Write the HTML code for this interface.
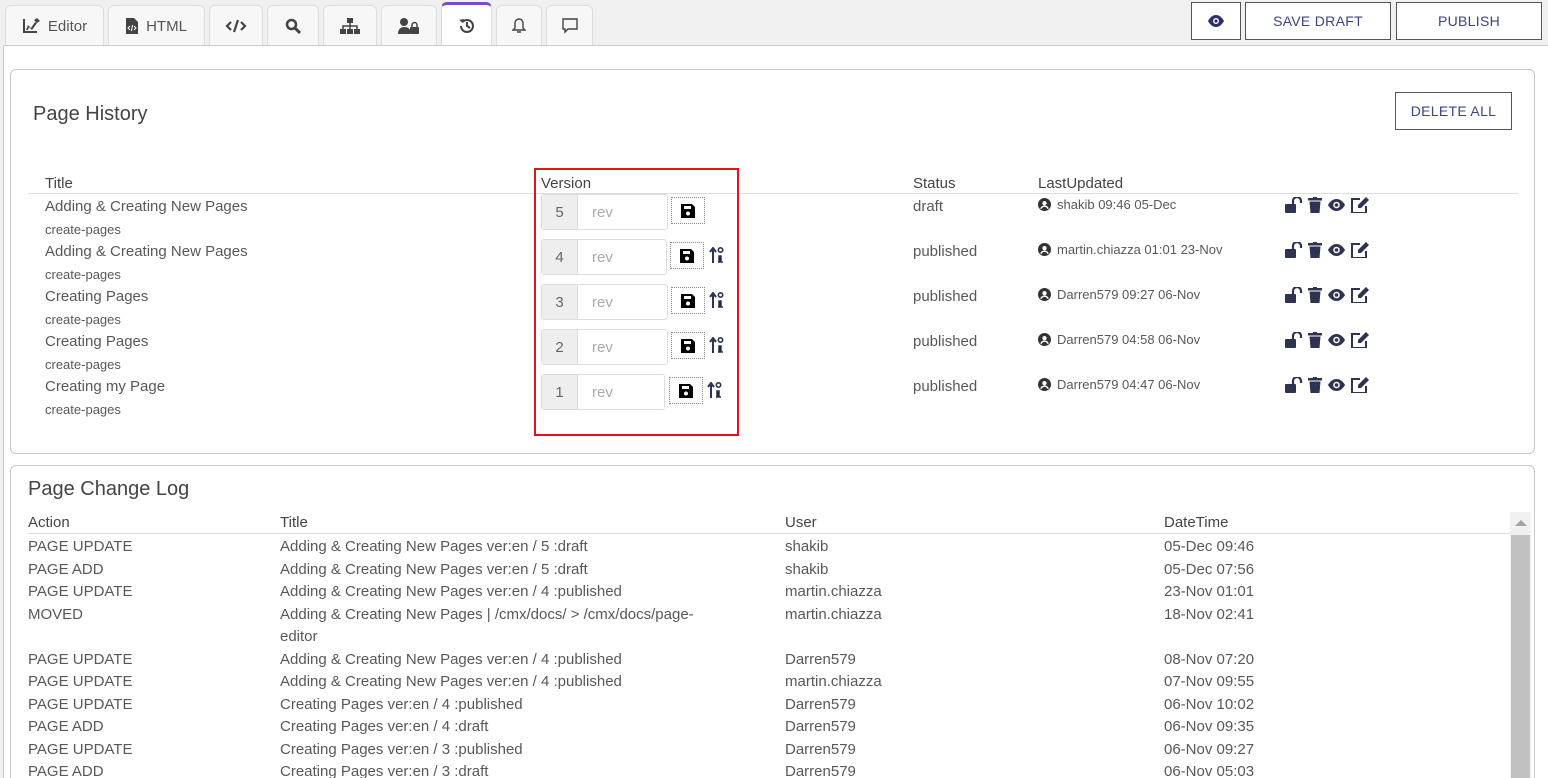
<!DOCTYPE html>
<html><head><meta charset="utf-8"><style>
*{box-sizing:border-box;margin:0;padding:0}
html{width:1548px;height:778px;overflow:hidden}
body{width:1548px;height:778px;overflow:hidden;background:#f0f0f0;font-family:"Liberation Sans",sans-serif;color:#585858;position:relative;font-size:15px}
.a{position:absolute;white-space:nowrap}
.tab{position:absolute;top:5px;height:41px;background:#f7f7f7;border:1px solid #ddd;border-bottom:none;border-radius:6px 6px 0 0;display:flex;align-items:center;justify-content:center;color:#555;font-size:15px;gap:8px}
.tab svg{fill:#444}
.main{position:absolute;left:3px;top:45px;width:1545px;height:733px;background:#fff;border-left:1px solid #ccc;border-top:1px solid #ccc}
.panel{position:absolute;border:1px solid #c8c8c8;border-radius:6px;background:#fff}
.btn{position:absolute;border:1px solid #555;background:#fff;color:#3b4480;font-size:14px;display:flex;align-items:center;justify-content:center;letter-spacing:.3px}
.small{font-size:13px;color:#585858}
.ver{position:absolute;left:541px;width:127px;height:36px;border:1px solid #ddd;border-radius:3px;background:#fff}
.ver .n{position:absolute;left:0;top:0;width:36px;height:34px;background:#eee;border-right:1px solid #ddd;display:flex;align-items:center;justify-content:center;color:#666}
.ver .r{position:absolute;left:50px;top:9px;color:#aaa}
.sv{position:absolute;width:34px;height:27px;border:1px dotted #888;display:flex;align-items:center;justify-content:center}
.icons{position:absolute;left:1285px;display:flex;gap:5px}
.icons svg{fill:#2d3350}
.u{display:inline-block;width:13px;height:13px;vertical-align:-2px;margin-right:6px}
</style></head><body>

<div class="tab" style="left:5px;width:99px"><svg width="18" height="16" viewBox="0 0 18 16"><path d="M1 1h2v12h12v2H1z M4 12l2-5 3 3 4-6 2 1-5 7-3-3-1 3z M12 2l3-2 3 3-3 2z"/></svg>Editor</div>
<div class="tab" style="left:108px;width:97px"><svg width="12" height="16" viewBox="0 0 12 16"><path d="M0 0h8l4 4v12H0z" /><path d="M4 8l-2 2 2 2M8 8l2 2-2 2M6.5 7l-1 6" stroke="#fff" fill="none"/></svg>HTML</div>
<div class="tab" style="left:209px;width:54px"><svg width="22" height="14" viewBox="0 0 22 14"><path d="M6 3L2 7l4 4M16 3l4 4-4 4M13 1L9 13" stroke="#444" stroke-width="2.2" fill="none"/></svg></div>
<div class="tab" style="left:267px;width:52px"><svg width="16" height="16" viewBox="0 0 16 16"><circle cx="6.5" cy="6.5" r="4.5" stroke="#444" stroke-width="2.5" fill="none"/><path d="M10 10l5 5" stroke="#444" stroke-width="3"/></svg></div>
<div class="tab" style="left:323px;width:54px"><svg width="20" height="16" viewBox="0 0 20 16"><rect x="7" y="0" width="6" height="5"/><rect x="0" y="11" width="6" height="5"/><rect x="7" y="11" width="6" height="5"/><rect x="14" y="11" width="6" height="5"/><path d="M10 5v6M3 11V8h14v3" stroke="#444" stroke-width="1.5" fill="none"/></svg></div>
<div class="tab" style="left:381px;width:56px"><svg width="22" height="16" viewBox="0 0 22 16"><circle cx="6" cy="4" r="4"/><path d="M0 16c0-5 3-7 6-7s5 1 6 3v4z"/><rect x="12" y="9" width="9" height="7" rx="1"/><path d="M14 9V7a2.5 2.5 0 015 0v2" stroke="#444" stroke-width="1.5" fill="none"/></svg></div>
<div class="tab" style="left:441px;width:51px;top:2px;height:44px;background:#fff;border-top:3px solid #7b4bc4"><svg width="18" height="16" viewBox="0 0 18 16"><path d="M3 8a6 6 0 106-6 6 6 0 00-4.5 2" stroke="#444" stroke-width="2" fill="none"/><path d="M1 2l4 3 1-4z"/><path d="M9 4v4l3 2" stroke="#444" stroke-width="2" fill="none"/></svg></div>
<div class="tab" style="left:496px;width:46px"><svg width="14" height="16" viewBox="0 0 14 16"><path d="M7 1a4 4 0 014 4v5l2 2H1l2-2V5a4 4 0 014-4z M5 14h4" stroke="#444" stroke-width="1.4" fill="none"/></svg></div>
<div class="tab" style="left:546px;width:47px"><svg width="16" height="16" viewBox="0 0 16 16"><path d="M1 1h14v10H6l-3 3v-3H1z" stroke="#444" stroke-width="1.4" fill="none"/></svg></div>

<div class="btn" style="left:1191px;top:2px;width:50px;height:38px"><svg width="18" height="12" viewBox="0 0 18 12"><path d="M9 0C4 0 1 6 1 6s3 6 8 6 8-6 8-6-3-6-8-6z" fill="#2b2f6b"/><circle cx="9" cy="6" r="3" fill="#fff"/><circle cx="9" cy="6" r="1.6" fill="#2b2f6b"/></svg></div>
<div class="btn" style="left:1245px;top:2px;width:146px;height:38px">SAVE DRAFT</div>
<div class="btn" style="left:1396px;top:2px;width:146px;height:38px">PUBLISH</div>

<div class="main"></div>

<div class="panel" style="left:10px;top:69px;width:1525px;height:385px"></div>
<div class="a" style="left:33px;top:103px;font-size:20px;color:#444">Page History</div>
<div class="btn" style="left:1395px;top:92px;width:117px;height:38px">DELETE ALL</div>

<div class="a" style="left:45px;top:175px;color:#444">Title</div>
<div class="a" style="left:541px;top:175px;color:#444">Version</div>
<div class="a" style="left:913px;top:175px;color:#444">Status</div>
<div class="a" style="left:1038px;top:175px;color:#444">LastUpdated</div>
<div class="a" style="left:28px;top:193px;width:1490px;height:1px;background:#ddd"></div>

<div class="a" style="left:45px;top:198px">Adding &amp; Creating New Pages</div><div class="a small" style="left:45px;top:222px">create-pages</div>
<div class="a" style="left:45px;top:243px">Adding &amp; Creating New Pages</div><div class="a small" style="left:45px;top:267px">create-pages</div>
<div class="a" style="left:45px;top:288px">Creating Pages</div><div class="a small" style="left:45px;top:312px">create-pages</div>
<div class="a" style="left:45px;top:333px">Creating Pages</div><div class="a small" style="left:45px;top:357px">create-pages</div>
<div class="a" style="left:45px;top:378px">Creating my Page</div><div class="a small" style="left:45px;top:402px">create-pages</div>

<div class="ver" style="top:194px"><div class="n">5</div><div class="r">rev</div></div>
<div class="ver" style="top:239px;width:126px"><div class="n">4</div><div class="r">rev</div></div>
<div class="ver" style="top:284px"><div class="n">3</div><div class="r">rev</div></div>
<div class="ver" style="top:329px"><div class="n">2</div><div class="r">rev</div></div>
<div class="ver" style="top:374px;width:124px"><div class="n">1</div><div class="r">rev</div></div>

<div class="sv" style="left:671px;top:197px"><svg width="14" height="14" viewBox="0 0 14 14"><path d="M0 0h11l3 3v11H0z"/><rect x="3" y="2" width="7" height="3" fill="#fff"/><circle cx="7" cy="9.5" r="2" fill="#fff"/></svg></div>
<div class="sv" style="left:670px;top:242px"><svg width="14" height="14" viewBox="0 0 14 14"><path d="M0 0h11l3 3v11H0z"/><rect x="3" y="2" width="7" height="3" fill="#fff"/><circle cx="7" cy="9.5" r="2" fill="#fff"/></svg></div>
<div class="sv" style="left:671px;top:287px"><svg width="14" height="14" viewBox="0 0 14 14"><path d="M0 0h11l3 3v11H0z"/><rect x="3" y="2" width="7" height="3" fill="#fff"/><circle cx="7" cy="9.5" r="2" fill="#fff"/></svg></div>
<div class="sv" style="left:671px;top:332px"><svg width="14" height="14" viewBox="0 0 14 14"><path d="M0 0h11l3 3v11H0z"/><rect x="3" y="2" width="7" height="3" fill="#fff"/><circle cx="7" cy="9.5" r="2" fill="#fff"/></svg></div>
<div class="sv" style="left:669px;top:377px"><svg width="14" height="14" viewBox="0 0 14 14"><path d="M0 0h11l3 3v11H0z"/><rect x="3" y="2" width="7" height="3" fill="#fff"/><circle cx="7" cy="9.5" r="2" fill="#fff"/></svg></div>

<svg class="a" style="left:709px;top:247px" width="15" height="16" viewBox="0 0 15 16"><path d="M4 16V3M1 5l3-4 3 4" stroke="#2d3350" stroke-width="2" fill="none"/><circle cx="11.5" cy="3" r="2.2" stroke="#2d3350" stroke-width="1.6" fill="none"/><path d="M10 9h2v6h-2zM9 15h5" stroke="#2d3350" stroke-width="1.5"/></svg>
<svg class="a" style="left:709px;top:292px" width="15" height="16" viewBox="0 0 15 16"><path d="M4 16V3M1 5l3-4 3 4" stroke="#2d3350" stroke-width="2" fill="none"/><circle cx="11.5" cy="3" r="2.2" stroke="#2d3350" stroke-width="1.6" fill="none"/><path d="M10 9h2v6h-2zM9 15h5" stroke="#2d3350" stroke-width="1.5"/></svg>
<svg class="a" style="left:709px;top:337px" width="15" height="16" viewBox="0 0 15 16"><path d="M4 16V3M1 5l3-4 3 4" stroke="#2d3350" stroke-width="2" fill="none"/><circle cx="11.5" cy="3" r="2.2" stroke="#2d3350" stroke-width="1.6" fill="none"/><path d="M10 9h2v6h-2zM9 15h5" stroke="#2d3350" stroke-width="1.5"/></svg>
<svg class="a" style="left:707px;top:382px" width="15" height="16" viewBox="0 0 15 16"><path d="M4 16V3M1 5l3-4 3 4" stroke="#2d3350" stroke-width="2" fill="none"/><circle cx="11.5" cy="3" r="2.2" stroke="#2d3350" stroke-width="1.6" fill="none"/><path d="M10 9h2v6h-2zM9 15h5" stroke="#2d3350" stroke-width="1.5"/></svg>

<div class="a" style="left:534px;top:168px;width:205px;height:268px;border:2px solid #e0141e"></div>

<div class="a" style="left:913px;top:198px">draft</div>
<div class="a" style="left:913px;top:243px">published</div>
<div class="a" style="left:913px;top:288px">published</div>
<div class="a" style="left:913px;top:333px">published</div>
<div class="a" style="left:913px;top:378px">published</div>

<div class="a small" style="left:1038px;top:197px"><svg class="u" viewBox="0 0 14 14"><circle cx="7" cy="7" r="7" fill="#333"/><circle cx="7" cy="5.5" r="2.3" fill="#fff"/><path d="M3 11.5c1-2 2.5-2.8 4-2.8s3 .8 4 2.8" stroke="#fff" stroke-width="1.6" fill="none"/></svg>shakib 09:46 05-Dec</div>
<div class="a small" style="left:1038px;top:242px"><svg class="u" viewBox="0 0 14 14"><circle cx="7" cy="7" r="7" fill="#333"/><circle cx="7" cy="5.5" r="2.3" fill="#fff"/><path d="M3 11.5c1-2 2.5-2.8 4-2.8s3 .8 4 2.8" stroke="#fff" stroke-width="1.6" fill="none"/></svg>martin.chiazza 01:01 23-Nov</div>
<div class="a small" style="left:1038px;top:287px"><svg class="u" viewBox="0 0 14 14"><circle cx="7" cy="7" r="7" fill="#333"/><circle cx="7" cy="5.5" r="2.3" fill="#fff"/><path d="M3 11.5c1-2 2.5-2.8 4-2.8s3 .8 4 2.8" stroke="#fff" stroke-width="1.6" fill="none"/></svg>Darren579 09:27 06-Nov</div>
<div class="a small" style="left:1038px;top:332px"><svg class="u" viewBox="0 0 14 14"><circle cx="7" cy="7" r="7" fill="#333"/><circle cx="7" cy="5.5" r="2.3" fill="#fff"/><path d="M3 11.5c1-2 2.5-2.8 4-2.8s3 .8 4 2.8" stroke="#fff" stroke-width="1.6" fill="none"/></svg>Darren579 04:58 06-Nov</div>
<div class="a small" style="left:1038px;top:377px"><svg class="u" viewBox="0 0 14 14"><circle cx="7" cy="7" r="7" fill="#333"/><circle cx="7" cy="5.5" r="2.3" fill="#fff"/><path d="M3 11.5c1-2 2.5-2.8 4-2.8s3 .8 4 2.8" stroke="#fff" stroke-width="1.6" fill="none"/></svg>Darren579 04:47 06-Nov</div>

<div class="icons" style="top:197px"><svg width="18" height="16" viewBox="0 0 18 16"><rect x="0" y="7" width="11" height="9" rx="1"/><path d="M8 7V4a4 4 0 018 0v2" stroke="#2d3350" stroke-width="2.2" fill="none"/></svg><svg width="14" height="16" viewBox="0 0 14 16"><rect x="0" y="1" width="14" height="2.5"/><rect x="5" y="0" width="4" height="2"/><path d="M1.5 4.5h11l-1 11.5h-9z"/></svg><svg width="19" height="16" viewBox="0 0 19 16"><path d="M9.5 2C4 2 1 8 1 8s3 6 8.5 6S18 8 18 8s-3-6-8.5-6z"/><circle cx="9.5" cy="8" r="3.3" fill="#fff"/><circle cx="9.5" cy="8" r="1.8"/></svg><svg width="18" height="16" viewBox="0 0 18 16"><path d="M9 2H1v14h14V9" stroke="#2d3350" stroke-width="2" fill="none"/><path d="M15 0l3 3-8 8H7V8z"/></svg></div>
<div class="icons" style="top:242px"><svg width="18" height="16" viewBox="0 0 18 16"><rect x="0" y="7" width="11" height="9" rx="1"/><path d="M8 7V4a4 4 0 018 0v2" stroke="#2d3350" stroke-width="2.2" fill="none"/></svg><svg width="14" height="16" viewBox="0 0 14 16"><rect x="0" y="1" width="14" height="2.5"/><rect x="5" y="0" width="4" height="2"/><path d="M1.5 4.5h11l-1 11.5h-9z"/></svg><svg width="19" height="16" viewBox="0 0 19 16"><path d="M9.5 2C4 2 1 8 1 8s3 6 8.5 6S18 8 18 8s-3-6-8.5-6z"/><circle cx="9.5" cy="8" r="3.3" fill="#fff"/><circle cx="9.5" cy="8" r="1.8"/></svg><svg width="18" height="16" viewBox="0 0 18 16"><path d="M9 2H1v14h14V9" stroke="#2d3350" stroke-width="2" fill="none"/><path d="M15 0l3 3-8 8H7V8z"/></svg></div>
<div class="icons" style="top:287px"><svg width="18" height="16" viewBox="0 0 18 16"><rect x="0" y="7" width="11" height="9" rx="1"/><path d="M8 7V4a4 4 0 018 0v2" stroke="#2d3350" stroke-width="2.2" fill="none"/></svg><svg width="14" height="16" viewBox="0 0 14 16"><rect x="0" y="1" width="14" height="2.5"/><rect x="5" y="0" width="4" height="2"/><path d="M1.5 4.5h11l-1 11.5h-9z"/></svg><svg width="19" height="16" viewBox="0 0 19 16"><path d="M9.5 2C4 2 1 8 1 8s3 6 8.5 6S18 8 18 8s-3-6-8.5-6z"/><circle cx="9.5" cy="8" r="3.3" fill="#fff"/><circle cx="9.5" cy="8" r="1.8"/></svg><svg width="18" height="16" viewBox="0 0 18 16"><path d="M9 2H1v14h14V9" stroke="#2d3350" stroke-width="2" fill="none"/><path d="M15 0l3 3-8 8H7V8z"/></svg></div>
<div class="icons" style="top:332px"><svg width="18" height="16" viewBox="0 0 18 16"><rect x="0" y="7" width="11" height="9" rx="1"/><path d="M8 7V4a4 4 0 018 0v2" stroke="#2d3350" stroke-width="2.2" fill="none"/></svg><svg width="14" height="16" viewBox="0 0 14 16"><rect x="0" y="1" width="14" height="2.5"/><rect x="5" y="0" width="4" height="2"/><path d="M1.5 4.5h11l-1 11.5h-9z"/></svg><svg width="19" height="16" viewBox="0 0 19 16"><path d="M9.5 2C4 2 1 8 1 8s3 6 8.5 6S18 8 18 8s-3-6-8.5-6z"/><circle cx="9.5" cy="8" r="3.3" fill="#fff"/><circle cx="9.5" cy="8" r="1.8"/></svg><svg width="18" height="16" viewBox="0 0 18 16"><path d="M9 2H1v14h14V9" stroke="#2d3350" stroke-width="2" fill="none"/><path d="M15 0l3 3-8 8H7V8z"/></svg></div>
<div class="icons" style="top:377px"><svg width="18" height="16" viewBox="0 0 18 16"><rect x="0" y="7" width="11" height="9" rx="1"/><path d="M8 7V4a4 4 0 018 0v2" stroke="#2d3350" stroke-width="2.2" fill="none"/></svg><svg width="14" height="16" viewBox="0 0 14 16"><rect x="0" y="1" width="14" height="2.5"/><rect x="5" y="0" width="4" height="2"/><path d="M1.5 4.5h11l-1 11.5h-9z"/></svg><svg width="19" height="16" viewBox="0 0 19 16"><path d="M9.5 2C4 2 1 8 1 8s3 6 8.5 6S18 8 18 8s-3-6-8.5-6z"/><circle cx="9.5" cy="8" r="3.3" fill="#fff"/><circle cx="9.5" cy="8" r="1.8"/></svg><svg width="18" height="16" viewBox="0 0 18 16"><path d="M9 2H1v14h14V9" stroke="#2d3350" stroke-width="2" fill="none"/><path d="M15 0l3 3-8 8H7V8z"/></svg></div>

<div class="panel" style="left:10px;top:465px;width:1525px;height:330px"></div>
<div class="a" style="left:28px;top:478px;font-size:20px;color:#444">Page Change Log</div>
<div class="a" style="left:28px;top:514px;color:#444">Action</div>
<div class="a" style="left:280px;top:514px;color:#444">Title</div>
<div class="a" style="left:785px;top:514px;color:#444">User</div>
<div class="a" style="left:1164px;top:514px;color:#444">DateTime</div>
<div class="a" style="left:28px;top:533px;width:1482px;height:1px;background:#ddd"></div>
<div class="a" style="left:1510px;top:512px;width:21px;height:266px;background:#f1f1f1"></div>
<div class="a" style="left:1511px;top:535px;width:19px;height:243px;background:#c1c1c1"></div>
<div class="a" style="left:1515px;top:520px;width:0;height:0;border-left:6px solid transparent;border-right:6px solid transparent;border-bottom:6px solid #a3a3a3"></div>

<div class="a" style="left:28px;top:536px;line-height:22.5px">PAGE UPDATE<br>PAGE ADD<br>PAGE UPDATE<br>MOVED<br><br>PAGE UPDATE<br>PAGE UPDATE<br>PAGE UPDATE<br>PAGE ADD<br>PAGE UPDATE<br>PAGE ADD</div>
<div class="a" style="left:280px;top:536px;line-height:22.5px">Adding &amp; Creating New Pages ver:en / 5 :draft<br>Adding &amp; Creating New Pages ver:en / 5 :draft<br>Adding &amp; Creating New Pages ver:en / 4 :published<br>Adding &amp; Creating New Pages | /cmx/docs/ &gt; /cmx/docs/page-<br>editor<br>Adding &amp; Creating New Pages ver:en / 4 :published<br>Adding &amp; Creating New Pages ver:en / 4 :published<br>Creating Pages ver:en / 4 :published<br>Creating Pages ver:en / 4 :draft<br>Creating Pages ver:en / 3 :published<br>Creating Pages ver:en / 3 :draft</div>
<div class="a" style="left:785px;top:536px;line-height:22.5px">shakib<br>shakib<br>martin.chiazza<br>martin.chiazza<br><br>Darren579<br>martin.chiazza<br>Darren579<br>Darren579<br>Darren579<br>Darren579</div>
<div class="a" style="left:1164px;top:536px;line-height:22.5px">05-Dec 09:46<br>05-Dec 07:56<br>23-Nov 01:01<br>18-Nov 02:41<br><br>08-Nov 07:20<br>07-Nov 09:55<br>06-Nov 10:02<br>06-Nov 09:35<br>06-Nov 09:27<br>06-Nov 05:03</div>
</body></html>
